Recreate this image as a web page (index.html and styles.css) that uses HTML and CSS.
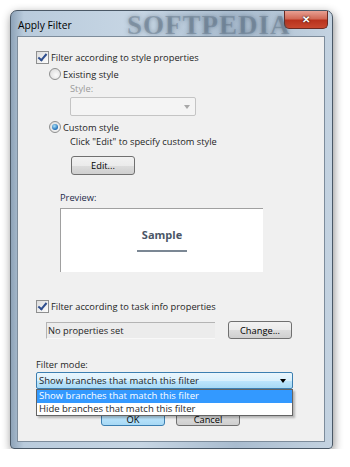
FILE: index.html
```html
<!DOCTYPE html>
<html lang="en">
<head>
    <meta charset="UTF-8">
    <title>Apply Filter</title>
    <link rel="stylesheet" href="styles.css">
</head>
<body>
    <div class="window">
        <div class="title-bar">
            <span class="title">Apply Filter</span>
            <span class="watermark">SOFTPEDIA</span>
            <button class="close-btn">&#x2715;</button>
        </div>

        <div class="client">
            <!-- style properties -->
            <label class="row check-row">
                <span class="checkbox checked"></span>
                Filter according to style properties
            </label>

            <div class="style-group">
                <label class="row radio-row">
                    <span class="radio"></span>
                    Existing style
                </label>
                <div class="sub">
                    <div class="row disabled-label">Style:</div>
                    <div class="combo disabled">
                        <span class="arrow"></span>
                    </div>
                </div>

                <label class="row radio-row custom">
                    <span class="radio checked"></span>
                    Custom style
                </label>
                <div class="sub">
                    <div class="row">Click "Edit" to specify custom style</div>
                    <button class="btn edit-btn">Edit...</button>
                </div>
            </div>

            <div class="preview-label row">Preview:</div>
            <div class="preview">
                <div class="sample">Sample</div>
            </div>

            <!-- task info properties -->
            <label class="row check-row task">
                <span class="checkbox checked"></span>
                Filter according to task info properties
            </label>
            <div class="props-row">
                <div class="props-field">No properties set</div>
                <button class="btn change-btn">Change...</button>
            </div>

            <div class="row mode-label">Filter mode:</div>
            <div class="mode-wrap">
                <div class="combo active">
                    Show branches that match this filter
                    <span class="arrow"></span>
                </div>
                <ul class="dropdown">
                    <li class="selected">Show branches that match this filter</li>
                    <li>Hide branches that match this filter</li>
                </ul>
            </div>

            <div class="dialog-buttons">
                <button class="btn default-btn">OK</button>
                <button class="btn">Cancel</button>
            </div>
        </div>
    </div>
</body>
</html>
```

FILE: styles.css
```css
* {
    box-sizing: border-box;
    margin: 0;
    padding: 0;
}

body {
    background: #fff;
    font-family: 'Open Sans', sans-serif;
    font-size: 9.3px;
    color: #1e1e1e;
}

.window {
    position: relative;
    width: 323px;
    height: 439px;
    margin: 10px 0 0 10px;
    border: 1px solid #4a5866;
    border-radius: 7px 7px 4px 4px;
    background: linear-gradient(90deg, #8ea3b8 0%, #b9cbdc 4%, #c7d6e4 40%, #a9bccf 70%, #c4d3e1 100%);
    box-shadow: 1px 3px 10px rgba(0,0,0,0.45);
    padding: 0 7px 6px 6px;
    display: flex;
    flex-direction: column;
}

.title-bar {
    position: relative;
    height: 25px;
    display: flex;
    align-items: center;
    justify-content: space-between;
}

.title {
    font-size: 10.3px;
    color: #000;
    padding-left: 1px;
    padding-top: 2px;
}

.watermark {
    position: absolute;
    left: 110px;
    top: -1px;
    font-family: 'Liberation Serif', serif;
    font-weight: bold;
    font-size: 27px;
    letter-spacing: 1px;
    color: rgba(70,90,110,0.35);
    text-shadow: 0 0 4px rgba(60,80,100,0.5);
}

.close-btn {
    align-self: flex-start;
    width: 44px;
    height: 18px;
    margin-right: -3px;
    border: 1px solid #6b2a22;
    border-top: none;
    border-radius: 0 0 5px 5px;
    background: linear-gradient(#e8a093 0%, #d26a57 45%, #b9321d 55%, #c8482f 100%);
    color: #fff;
    font-size: 10px;
    font-weight: bold;
    text-shadow: 0 0 2px #000;
}

.client {
    position: relative;
    flex: 1;
    background: #f0f0f0;
    border: 1px solid #7d8c9b;
    padding: 13px 0 0 18px;
}

.row {
    display: flex;
    align-items: center;
    height: 14px;
    white-space: nowrap;
}

.checkbox {
    width: 13px;
    height: 13px;
    margin-right: 2px;
    border: 1px solid #8e8f8f;
    background: linear-gradient(135deg, #dcdcdc, #fdfdfd);
    position: relative;
}

.checkbox.checked::after {
    content: '';
    position: absolute;
    left: 3px;
    top: 0px;
    width: 3px;
    height: 7px;
    border: solid #2e4e8e;
    border-width: 0 2px 2px 0;
    transform: rotate(40deg);
}

.style-group {
    padding-left: 13px;
}

.radio-row {
    margin-top: 3px;
}

.radio {
    width: 12px;
    height: 12px;
    margin-right: 2px;
    border: 1px solid #8e8f8f;
    border-radius: 50%;
    background: radial-gradient(circle at 60% 60%, #fbfbfb, #d6d6d6);
    position: relative;
}

.radio.checked::after {
    content: '';
    position: absolute;
    left: 2px;
    top: 2px;
    width: 6px;
    height: 6px;
    border-radius: 50%;
    background: radial-gradient(circle at 40% 35%, #a9e1f8, #1b6bb6 70%, #0e3f78);
}

.sub {
    padding-left: 21px;
}

.disabled-label {
    color: #9a9a9a;
}

.combo {
    position: relative;
    height: 19px;
    border: 1px solid #c4c4c4;
    border-radius: 2px;
    display: flex;
    align-items: center;
    padding-left: 2px;
}

.combo.disabled {
    width: 126px;
    margin-top: 2px;
    background: #f4f4f4;
}

.arrow {
    position: absolute;
    right: 5px;
    top: 7px;
    border: 3px solid transparent;
    border-top: 4px solid #a8a8a8;
}

.custom {
    margin-top: 4px;
}

.btn {
    font-family: inherit;
    font-size: 9.3px;
    color: #000;
    height: 19px;
    width: 64px;
    border: 1px solid #707070;
    border-radius: 3px;
    background: linear-gradient(#f2f2f2 0%, #ebebeb 50%, #dddddd 50%, #cfcfcf 100%);
}

.edit-btn {
    margin: 8px 0 0 1px;
}

.preview-label {
    margin: 15px 0 0 24px;
    color: #1e2a4a;
}

.preview {
    width: 203px;
    height: 64px;
    margin: 4px 0 0 24px;
    background: #fff;
    border-top: 1px solid #a0a0a0;
    border-left: 1px solid #a0a0a0;
    display: flex;
    justify-content: center;
    padding-top: 18px;
}

.sample {
    height: 25px;
    padding: 0 5px;
    font-size: 11px;
    font-weight: bold;
    color: #4a5566;
    border-bottom: 2px solid #7b8794;
}

.task {
    margin-top: 27px;
}

.props-row {
    display: flex;
    align-items: center;
    margin: 8px 0 0 10px;
    gap: 13px;
}

.props-field {
    width: 169px;
    height: 17px;
    line-height: 15px;
    padding-left: 1px;
    background: #ececec;
    border-top: 1px solid #b4b4b4;
    border-left: 1px solid #b4b4b4;
    border-bottom: 1px solid #f8f8f8;
}

.change-btn {
    height: 18px;
}

.mode-label {
    margin-top: 18px;
}

.mode-wrap {
    position: relative;
    width: 257px;
    margin-top: 1px;
}

.combo.active {
    height: 17px;
    border-color: #3c7fb1;
    background: linear-gradient(#eaf6fd 0%, #d9f0fc 50%, #bee6fd 50%, #a7d9f5 100%);
    font-size: 9.5px;
}

.combo.active .arrow {
    right: 6px;
    top: 6px;
    border-top-color: #000;
}

.dropdown {
    position: absolute;
    left: 0;
    top: 17px;
    width: 257px;
    list-style: none;
    background: #fff;
    border: 1px solid #646464;
    box-shadow: 2px 2px 2px rgba(0,0,0,0.25);
    font-size: 9.5px;
    z-index: 2;
}

.dropdown li {
    height: 12.5px;
    line-height: 12px;
    padding-left: 2px;
}

.dropdown li.selected {
    background: #3399ff;
    color: #fff;
}

.dialog-buttons {
    display: flex;
    gap: 11px;
    margin: 17px 0 0 65px;
}

.dialog-buttons .btn {
    height: 20px;
    padding-top: 6px;
}

.default-btn {
    border-color: #3c7fb1;
    background: linear-gradient(#eaf6fd 0%, #d9f0fc 50%, #bee6fd 50%, #a7d9f5 100%);
}
```
